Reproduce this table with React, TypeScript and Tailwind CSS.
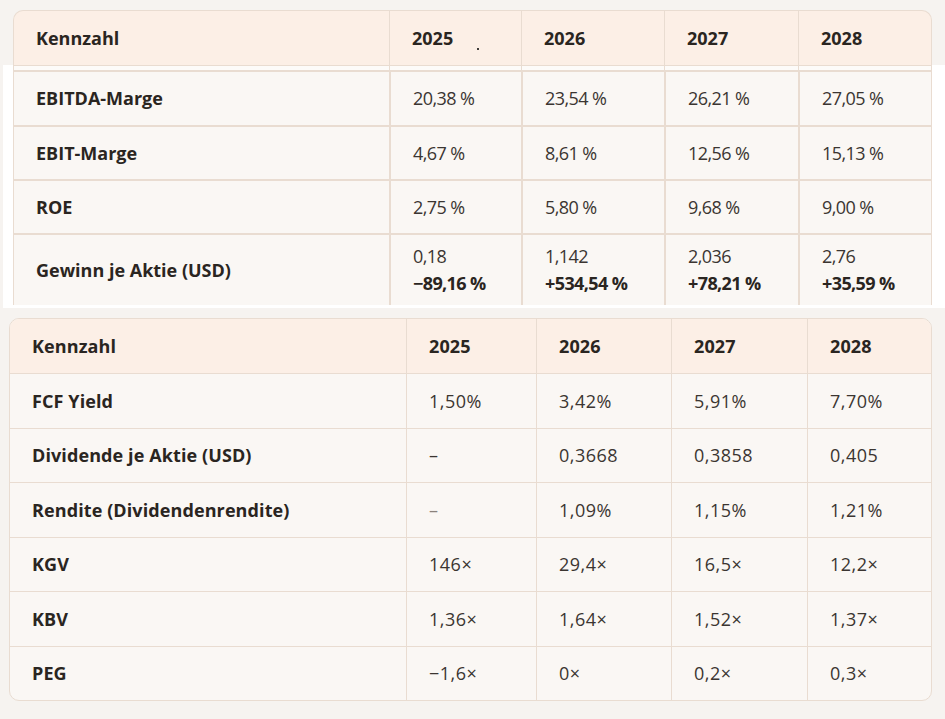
import React from "react";

const font = { fontFamily: '"Open Sans", "Noto Sans", sans-serif' };

type TopRow = { label: string; vals: (string | [string, string])[]; h: string };

const topRows: TopRow[] = [
  { label: "EBITDA-Marge", vals: ["20,38 %", "23,54 %", "26,21 %", "27,05 %"], h: "h-[55px]" },
  { label: "EBIT-Marge", vals: ["4,67 %", "8,61 %", "12,56 %", "15,13 %"], h: "h-[54px]" },
  { label: "ROE", vals: ["2,75 %", "5,80 %", "9,68 %", "9,00 %"], h: "h-[54px]" },
  {
    label: "Gewinn je Aktie (USD)",
    vals: [
      ["0,18", "−89,16 %"],
      ["1,142", "+534,54 %"],
      ["2,036", "+78,21 %"],
      ["2,76", "+35,59 %"],
    ],
    h: "h-[72px]",
  },
];

const bottomRows: { label: string; vals: string[]; light?: boolean; h: string }[] = [
  { label: "FCF Yield", vals: ["1,50%", "3,42%", "5,91%", "7,70%"], h: "h-[55px]" },
  { label: "Dividende je Aktie (USD)", vals: ["–", "0,3668", "0,3858", "0,405"], h: "h-[54px]" },
  { label: "Rendite (Dividendenrendite)", vals: ["–", "1,09%", "1,15%", "1,21%"], light: true, h: "h-[55px]" },
  { label: "KGV", vals: ["146×", "29,4×", "16,5×", "12,2×"], h: "h-[54px]" },
  { label: "KBV", vals: ["1,36×", "1,64×", "1,52×", "1,37×"], h: "h-[55px]" },
  { label: "PEG", vals: ["−1,6×", "0×", "0,2×", "0,3×"], h: "h-[54px]" },
];

const topCols = "grid grid-cols-[375px_132px_143px_134px_135px]";
const botCols = "grid grid-cols-[396px_130px_135px_136px_126px]";

export default function App() {
  return (
    <div className="w-[945px] h-[719px] bg-[#f6f3f0] overflow-hidden text-[#2a2521]" style={font}>
      {/* Top table header */}
      <div className="pt-[10px]">
        <div
          className={`${topCols} ml-[13px] w-[919px] h-[55px] bg-[#fcefe6] border border-b-0 border-[#e9dcd1] rounded-t-[10px]`}
        >
          <div className="flex items-center pl-[22px] text-[18px] font-bold tracking-[0px]">Kennzahl</div>
          {["2025", "2026", "2027", "2028"].map((y, i) => (
            <div
              key={y}
              className="relative flex items-center pl-[22px] border-l border-[#e9dcd1] text-[18px] font-bold tracking-[0px]"
            >
              {y}
              {i === 0 && <span className="absolute left-[87px] top-[37px] w-[2px] h-[2px] rounded-full bg-black" />}
            </div>
          ))}
        </div>
      </div>

      {/* Top table body (white band) */}
      <div className="ml-[3px] bg-white pb-[3px]">
        <div className="ml-[10px] w-[919px] border-x border-[#e9dcd1] bg-[#faf7f4]">
          <div className={`${topCols} h-[5px] border-t border-[#e9dcd1] bg-[#fdfbf9]`}>
            <div />
            <div className="border-l border-[#e9dcd1]" />
            <div className="border-l border-[#e9dcd1]" />
            <div className="border-l border-[#e9dcd1]" />
            <div className="border-l border-[#e9dcd1]" />
          </div>
          {topRows.map((r) => (
            <div key={r.label} className={`${topCols} ${r.h} border-t-2 border-[#e9dcd1]`}>
              <div className="flex items-center pl-[22px] text-[18px] font-bold tracking-[0px]">{r.label}</div>
              {r.vals.map((v, i) => (
                <div
                  key={i}
                  className="flex flex-col justify-center pl-[22px] border-l-2 border-[#e9dcd1] text-[18px] text-[#3b3531] tracking-[-0.6px]"
                >
                  {typeof v === "string" ? (
                    v
                  ) : (
                    <>
                      <span className="leading-[27px]">{v[0]}</span>
                      <span className="leading-[27px] font-bold text-[#2a2521]">{v[1]}</span>
                    </>
                  )}
                </div>
              ))}
            </div>
          ))}
        </div>
      </div>

      {/* Bottom table */}
      <div className="pt-[10px]">
        <div className="ml-[9px] w-[923px] border border-[#e9dcd1] rounded-[10px] overflow-hidden bg-[#faf7f4]">
          <div className={`${botCols} h-[54px] bg-[#fcefe6]`}>
            <div className="flex items-center pl-[22px] text-[18px] font-bold tracking-[0.1px]">Kennzahl</div>
            {["2025", "2026", "2027", "2028"].map((y) => (
              <div
                key={y}
                className="flex items-center pl-[22px] border-l border-[#e9dcd1] text-[18px] font-bold tracking-[0.1px]"
              >
                {y}
              </div>
            ))}
          </div>
          {bottomRows.map((r) => (
            <div key={r.label} className={`${botCols} ${r.h} border-t border-[#e9dcd1]`}>
              <div className="flex items-center pl-[22px] text-[18px] font-bold tracking-[0.1px]">{r.label}</div>
              {r.vals.map((v, i) => (
                <div
                  key={i}
                  className={`flex items-center pl-[22px] border-l border-[#e9dcd1] text-[18px] tracking-[0.5px] ${
                    r.light && v === "–" ? "text-[#8a827c]" : "text-[#3b3531]"
                  }`}
                >
                  {v}
                </div>
              ))}
            </div>
          ))}
        </div>
      </div>
    </div>
  );
}
